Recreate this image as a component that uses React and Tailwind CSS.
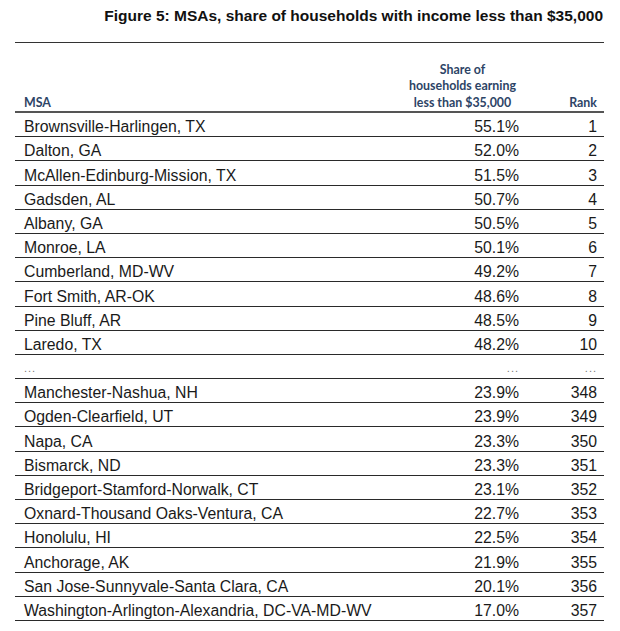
import React from 'react';

const top = [
  ['Brownsville-Harlingen, TX', '55.1%', '1'],
  ['Dalton, GA', '52.0%', '2'],
  ['McAllen-Edinburg-Mission, TX', '51.5%', '3'],
  ['Gadsden, AL', '50.7%', '4'],
  ['Albany, GA', '50.5%', '5'],
  ['Monroe, LA', '50.1%', '6'],
  ['Cumberland, MD-WV', '49.2%', '7'],
  ['Fort Smith, AR-OK', '48.6%', '8'],
  ['Pine Bluff, AR', '48.5%', '9'],
  ['Laredo, TX', '48.2%', '10'],
];

const bottom = [
  ['Manchester-Nashua, NH', '23.9%', '348'],
  ['Ogden-Clearfield, UT', '23.9%', '349'],
  ['Napa, CA', '23.3%', '350'],
  ['Bismarck, ND', '23.3%', '351'],
  ['Bridgeport-Stamford-Norwalk, CT', '23.1%', '352'],
  ['Oxnard-Thousand Oaks-Ventura, CA', '22.7%', '353'],
  ['Honolulu, HI', '22.5%', '354'],
  ['Anchorage, AK', '21.9%', '355'],
  ['San Jose-Sunnyvale-Santa Clara, CA', '20.1%', '356'],
  ['Washington-Arlington-Alexandria, DC-VA-MD-WV', '17.0%', '357'],
];

const cols = 'grid grid-cols-[1fr_120px_78px]';

function Row({ msa, share, rank }) {
  return (
    <div className={`${cols} h-[24.2px] items-end border-b-[1.5px] border-[#2a2a2a] text-[15.8px] leading-[18px] text-[#1a1a1a]`}>
      <div className="pl-[9px] whitespace-nowrap">{msa}</div>
      <div className="pr-[7px] text-right">{share}</div>
      <div className="pr-[7px] text-right">{rank}</div>
    </div>
  );
}

export default function App() {
  return (
    <div className="w-[620px] h-[631px] bg-white font-['Liberation_Sans',Arial,sans-serif]">
      <div className="h-[42px] pt-[7px] pr-[17px] text-right text-[15.5px] font-bold leading-[18px] whitespace-nowrap text-[#111]">
        Figure 5: MSAs, share of households with income less than $35,000
      </div>
      <div className="mx-[15px] w-[589px]">
        <div className="border-t-[1.5px] border-[#333]" />
        <div className={`${cols} h-[70px] items-end border-b-2 border-[#555] font-['Lato',sans-serif] text-[12.4px] font-bold leading-[16.5px] text-[#2d4466]`}>
          <div className="pl-[9px]">MSA</div>
          <div className="pr-[7px] text-center">
            Share of<br />households earning<br />less than $35,000
          </div>
          <div className="pr-[7px] text-right">Rank</div>
        </div>
        {top.map(([m, s, r]) => <Row key={r} msa={m} share={s} rank={r} />)}
        <div className={`${cols} h-[24.2px] items-end border-b-[1.5px] border-[#2a2a2a] pb-[4px] text-[11px] leading-[12px] tracking-[1px] text-[#777]`}>
          <div className="pl-[9px]">...</div>
          <div className="pr-[7px] text-right">...</div>
          <div className="pr-[7px] text-right">...</div>
        </div>
        {bottom.map(([m, s, r]) => <Row key={r} msa={m} share={s} rank={r} />)}
      </div>
    </div>
  );
}
